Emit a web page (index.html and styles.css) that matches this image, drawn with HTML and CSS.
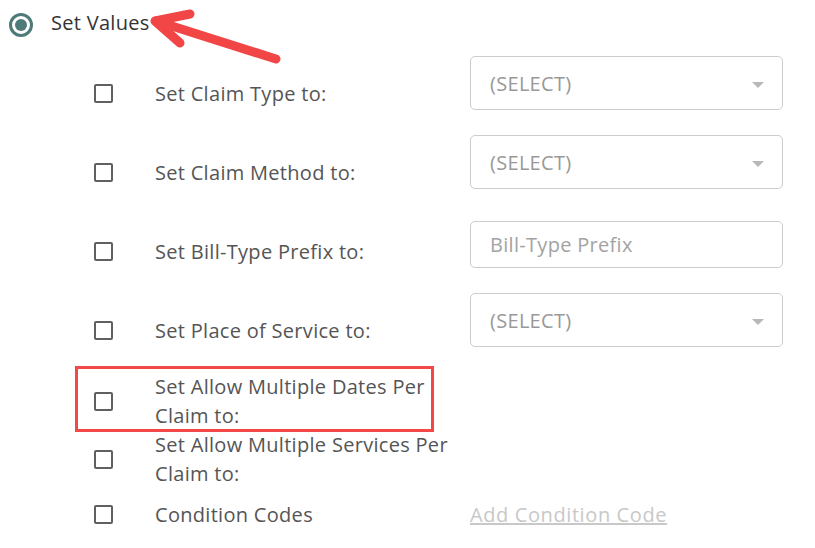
FILE: index.html
```html
<!DOCTYPE html>
<html lang="en">
<head>
    <meta charset="UTF-8">
    <title>Set Values</title>
    <link rel="stylesheet" href="styles.css">
</head>
<body>
    <div class="page">
        <label class="mode">
            <input type="radio" name="mode" checked>
            <span>Set Values</span>
        </label>

        <!-- annotation arrow -->
        <svg class="arrow" width="300" height="80" viewBox="0 0 300 80">
            <line x1="156" y1="21" x2="276" y2="59" />
            <polyline points="190,14 155,21 180,43" />
        </svg>

        <div class="options">
            <div class="opt">
                <label class="opt-label"><input type="checkbox"><span>Set Claim Type to:</span></label>
                <div class="select-wrap">
                    <select><option>(SELECT)</option></select>
                </div>
            </div>

            <div class="opt">
                <label class="opt-label"><input type="checkbox"><span>Set Claim Method to:</span></label>
                <div class="select-wrap">
                    <select><option>(SELECT)</option></select>
                </div>
            </div>

            <div class="opt">
                <label class="opt-label"><input type="checkbox"><span>Set Bill-Type Prefix to:</span></label>
                <input class="text-input" type="text" placeholder="Bill-Type Prefix">
            </div>

            <div class="opt">
                <label class="opt-label"><input type="checkbox"><span>Set Place of Service to:</span></label>
                <div class="select-wrap">
                    <select><option>(SELECT)</option></select>
                </div>
            </div>

            <div class="opt plain">
                <label class="opt-label"><input type="checkbox"><span>Set Allow Multiple Dates Per Claim to:</span></label>
                <div class="highlight"></div>
            </div>

            <div class="opt plain">
                <label class="opt-label"><input type="checkbox"><span>Set Allow Multiple Services Per Claim to:</span></label>
            </div>

            <div class="opt plain codes">
                <label class="opt-label"><input type="checkbox"><span>Condition Codes</span></label>
                <a class="add-link" href="#">Add Condition Code</a>
            </div>
        </div>
    </div>
</body>
</html>
```

FILE: styles.css
```css
body {
    margin: 0;
    font-family: "Open Sans", "Noto Sans", sans-serif;
    font-size: 20px;
    letter-spacing: 0.3px;
    color: #555;
    background: #fff;
}
.page {
    position: relative;
    padding-top: 8px;
}
.mode {
    display: flex;
    align-items: flex-start;
    gap: 18px;
    padding-left: 9px;
    line-height: 29px;
    color: #333;
}
.mode input {
    appearance: none;
    width: 24px;
    height: 24px;
    margin: 5px 0 0;
    border: 3px solid #4e7b79;
    border-radius: 50%;
    display: grid;
    place-content: center;
}
.mode input:checked::before {
    content: "";
    width: 12px;
    height: 12px;
    border-radius: 50%;
    background: #4e7b79;
}
.arrow {
    position: absolute;
    left: 0;
    top: 0;
    fill: none;
    stroke: #f24646;
    stroke-width: 9;
    stroke-linecap: round;
    stroke-linejoin: round;
}
.options {
    margin-top: 19px;
    padding-left: 94px;
}
.opt {
    position: relative;
    display: flex;
    align-items: flex-end;
    gap: 15px;
    min-height: 54px;
    margin-bottom: 25px;
}
.opt.plain {
    min-height: 0;
    margin-bottom: 0;
}
.opt.codes {
    margin-top: 12px;
}
.opt-label {
    display: flex;
    align-items: center;
    width: 361px;
    padding-bottom: 2px;
    line-height: 29px;
}
.opt.plain .opt-label {
    padding-bottom: 0;
}
.opt-label input {
    appearance: none;
    flex: none;
    width: 19px;
    height: 19px;
    margin: 0 42px 0 0;
    border: 2px solid #606060;
    border-radius: 2px;
}
.opt-label span {
    width: 300px;
}
.select-wrap {
    position: relative;
    width: 313px;
}
.select-wrap::after {
    content: "";
    position: absolute;
    right: 19px;
    top: 50%;
    margin-top: -1px;
    border-left: 6px solid transparent;
    border-right: 6px solid transparent;
    border-top: 6px solid #b8b8b8;
}
select,
.text-input {
    display: block;
    width: 313px;
    box-sizing: border-box;
    padding: 0 19px;
    border: 1px solid #ccc;
    border-radius: 5px;
    background: #fff;
    font: inherit;
    letter-spacing: 0.3px;
    color: #999;
}
select {
    appearance: none;
    height: 54px;
}
.text-input {
    height: 47px;
}
.text-input::placeholder {
    color: #a3a3a3;
}
.highlight {
    position: absolute;
    left: -19px;
    top: -6px;
    width: 359px;
    height: 66px;
    box-sizing: border-box;
    border: 3px solid #f24848;
}
.add-link {
    line-height: 29px;
    letter-spacing: 0.6px;
    color: #c8c8c8;
    text-decoration: underline;
}
```
